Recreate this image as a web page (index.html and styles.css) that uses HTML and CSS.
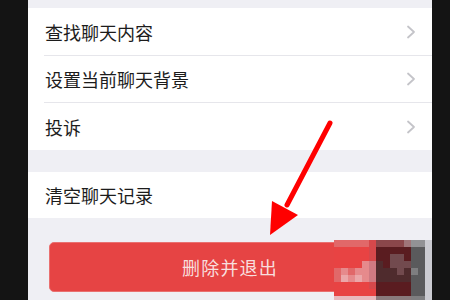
FILE: index.html
```html
<!DOCTYPE html>
<html lang="zh">
<head>
<meta charset="utf-8">
<link rel="stylesheet" href="styles.css">
</head>
<body>
<div class="screen">
  <div class="top-gap"></div>
  <div class="group">
    <div class="row"><span class="label">查找聊天内容</span><svg class="chev" viewBox="0 0 10 14"><path d="M2 1.5 L8 7 L2 12.5"/></svg></div>
    <div class="sep"></div>
    <div class="row row-mid"><span class="label">设置当前聊天背景</span><svg class="chev" viewBox="0 0 10 14"><path d="M2 1.5 L8 7 L2 12.5"/></svg></div>
    <div class="sep"></div>
    <div class="row"><span class="label">投诉</span><svg class="chev" viewBox="0 0 10 14"><path d="M2 1.5 L8 7 L2 12.5"/></svg></div>
  </div>
  <div class="gap1"></div>
  <div class="group">
    <div class="row row-mid"><span class="label">清空聊天记录</span></div>
  </div>
  <div class="btn-wrap">
    <div class="btn">删除并退出</div>
  </div>
</div>

<div class="mosaic">
  <i class="a"></i><i class="a"></i><i class="a"></i><i class="a"></i><i class="a"></i><i class="c"></i><i class="d"></i><i class="d"></i><i class="d"></i><i class="d"></i><i class="p"></i><i class="g"></i><i class="g"></i><i class="i"></i>
  <i class="b"></i><i class="b"></i><i class="b"></i><i class="b"></i><i class="b"></i><i class="c"></i><i class="e"></i><i class="e"></i><i class="e"></i><i class="e"></i><i class="e"></i><i class="h"></i><i class="h"></i><i class="i"></i>
  <i class="b"></i><i class="b"></i><i class="b"></i><i class="b"></i><i class="b"></i><i class="c"></i><i class="e"></i><i class="e"></i><i class="f"></i><i class="f"></i><i class="e"></i><i class="h"></i><i class="h"></i><i class="i"></i>
  <i class="b"></i><i class="b"></i><i class="b"></i><i class="b"></i><i class="j"></i><i class="q"></i><i class="l"></i><i class="e"></i><i class="f"></i><i class="f"></i><i class="f"></i><i class="h"></i><i class="h"></i><i class="i"></i>
  <i class="a"></i><i class="j"></i><i class="a"></i><i class="j"></i><i class="j"></i><i class="q"></i><i class="l"></i><i class="l"></i><i class="l"></i><i class="f"></i><i class="l"></i><i class="o"></i><i class="h"></i><i class="i"></i>
  <i class="a"></i><i class="k"></i><i class="j"></i><i class="k"></i><i class="j"></i><i class="q"></i><i class="l"></i><i class="l"></i><i class="l"></i><i class="l"></i><i class="l"></i><i class="h"></i><i class="h"></i><i class="i"></i>
  <i class="b"></i><i class="b"></i><i class="b"></i><i class="b"></i><i class="b"></i><i class="c"></i><i class="e"></i><i class="e"></i><i class="e"></i><i class="e"></i><i class="e"></i><i class="h"></i><i class="h"></i><i class="i"></i>
  <i class="b"></i><i class="b"></i><i class="b"></i><i class="b"></i><i class="b"></i><i class="b"></i><i class="e"></i><i class="e"></i><i class="e"></i><i class="e"></i><i class="e"></i><i class="h"></i><i class="h"></i><i class="i"></i>
  <i class="m"></i><i class="m"></i><i class="m"></i><i class="m"></i><i class="m"></i><i class="m"></i><i class="n"></i><i class="n"></i><i class="n"></i><i class="n"></i><i class="n"></i><i class="o"></i><i class="o"></i><i class="i"></i>
</div>

<svg class="arrow" width="450" height="300" viewBox="0 0 450 300">
  <line x1="330" y1="123" x2="287" y2="205" class="shaft"/>
  <polygon points="270,235 272,201 298,215" class="head"/>
</svg>
</body>
</html>
```

FILE: styles.css
```css
* { box-sizing: border-box; }
html, body { margin: 0; padding: 0; }
body {
  width: 450px;
  height: 300px;
  overflow: hidden;
  background: #141414;
  font-family: "Noto Sans CJK SC", "Noto Sans", sans-serif;
  position: relative;
}
.screen {
  margin-left: 28px;
  width: 404px;
  height: 300px;
  background: #efeff4;
  display: flex;
  flex-direction: column;
}
.top-gap { height: 8px; flex: none; }
.group { background: #fff; display: flex; flex-direction: column; }
.row {
  height: 47px;
  display: flex;
  align-items: center;
  justify-content: space-between;
  padding: 0 16px 0 17px;
}
.row-mid { height: 46px; }
.label {
  font-size: 18px;
  color: #1c1c1c;
  line-height: 1;
}
.sep {
  height: 1px;
  margin-left: 16px;
  background: #e6e6eb;
}
.chev {
  width: 10px;
  height: 14px;
  fill: none;
  stroke: #c4c4c9;
  stroke-width: 1.8;
  stroke-linecap: round;
  stroke-linejoin: round;
}
.gap1 { height: 22px; flex: none; }
.btn-wrap { padding: 24px 21px 0; }
.btn {
  height: 50px;
  border-radius: 5px;
  background: #e64444;
  border: 1px solid #e97070;
  color: #f8dede;
  font-size: 18px;
  letter-spacing: 1.2px;
  display: flex;
  align-items: center;
  justify-content: center;
}
.mosaic {
  position: absolute;
  left: 334px;
  top: 240px;
  display: grid;
  grid-template-columns: repeat(14, 7px);
  grid-auto-rows: 7px;
}
.mosaic i { display: block; }
.mosaic .a { background: #e16869; }
.mosaic .b { background: #e84343; }
.mosaic .c { background: #d6484b; }
.mosaic .d { background: #8b474b; }
.mosaic .e { background: #5a1c20; }
.mosaic .f { background: #724a4e; }
.mosaic .g { background: #929295; }
.mosaic .h { background: #5a5a5c; }
.mosaic .i { background: #cbcbd1; }
.mosaic .j { background: #e68a8c; }
.mosaic .k { background: #eba7a9; }
.mosaic .l { background: #4f2b2d; }
.mosaic .m { background: #e9b9bd; }
.mosaic .n { background: #8a7a7c; }
.mosaic .o { background: #7e7e80; }
.mosaic .p { background: #a07579; }
.mosaic .q { background: #cf7a82; }
.arrow {
  position: absolute;
  left: 0;
  top: 0;
  pointer-events: none;
}
.arrow .shaft {
  stroke: #ff0000;
  stroke-width: 5;
  stroke-linecap: round;
}
.arrow .head { fill: #ff0000; }
```
